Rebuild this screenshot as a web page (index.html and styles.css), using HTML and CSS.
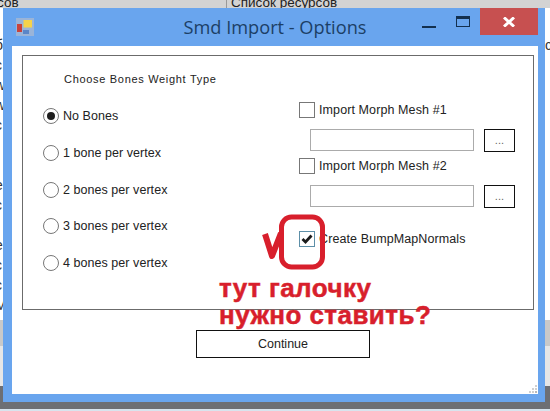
FILE: index.html
```html
<!DOCTYPE html>
<html lang="en">
<head>
    <meta charset="UTF-8">
    <meta name="viewport" content="width=device-width, initial-scale=1.0">
    <title>Smd Import - Options</title>
    <link rel="stylesheet" href="styles.css">
</head>
<body>
    <div class="desktop">
        <div class="app-head">
            <span class="app-head-left"><span class="app-head-cut">сов</span></span>
            <span class="app-head-right">Список ресурсов</span>
        </div>
        <div class="app-list">
            <div class="app-list-left">
                <div>б</div><div>с</div><div>w</div><div>w</div><div>c</div><div>r</div><div>r</div><div>e</div>
                <div>c</div><div>r</div><div>e</div><div>c</div><div>c</div><div>M</div>
            </div>
            <div class="app-list-right">с</div>
        </div>
        <div class="app-band"></div>
        <div class="app-foot"></div>

        <div class="window">
            <div class="titlebar">
                <svg class="app-icon" width="18" height="18" viewBox="0 0 18 18">
                    <rect x="0" y="0" width="18" height="18" fill="#9ab4d8"/>
                    <rect x="7.5" y="2" width="8.5" height="7.5" fill="#f5d34a"/>
                    <rect x="1" y="6" width="5" height="8" fill="#c8423c"/>
                    <rect x="7" y="12" width="6" height="4" fill="#5a86c8"/>
                </svg>
                <div class="title">Smd Import - Options</div>
                <div class="caption-min"></div>
                <div class="caption-max"></div>
                <div class="caption-close">
                    <svg width="12" height="10" viewBox="0 0 12 10">
                        <path d="M1 0.5 L11 9.5 M11 0.5 L1 9.5" stroke="#fff" stroke-width="3" fill="none"/>
                    </svg>
                </div>
            </div>
            <div class="client">
                <div class="group">
                    <div class="col-left">
                        <div class="group-title">Choose Bones Weight Type</div>
                        <div class="radio-list">
                            <div class="radio-row"><span class="radio checked"></span>No Bones</div>
                            <div class="radio-row"><span class="radio"></span>1 bone per vertex</div>
                            <div class="radio-row"><span class="radio"></span>2 bones per vertex</div>
                            <div class="radio-row"><span class="radio"></span>3 bones per vertex</div>
                            <div class="radio-row"><span class="radio"></span>4 bones per vertex</div>
                        </div>
                    </div>
                    <div class="col-right">
                        <div class="check-row"><span class="check"></span>Import Morph Mesh #1</div>
                        <div class="file-row">
                            <div class="file-box"></div>
                            <div class="file-btn">...</div>
                        </div>
                        <div class="check-row second"><span class="check"></span>Import Morph Mesh #2</div>
                        <div class="file-row">
                            <div class="file-box"></div>
                            <div class="file-btn">...</div>
                        </div>
                        <div class="check-row third">
                            <span class="check on">
                                <svg width="14" height="14" viewBox="0 0 14 14">
                                    <path d="M2.5 7 L5.5 10 L11.5 3.5" stroke="#1b1b1b" stroke-width="2.8" fill="none"/>
                                </svg>
                            </span>Create BumpMapNormals
                        </div>
                    </div>
                </div>
                <div class="actions">
                    <div class="continue">Continue</div>
                </div>
                <svg class="grip" width="9" height="9" viewBox="0 0 9 9">
                    <rect x="6" y="0" width="2" height="2" fill="#d0d0d0"/>
                    <rect x="3" y="3" width="2" height="2" fill="#d0d0d0"/>
                    <rect x="6" y="3" width="2" height="2" fill="#d0d0d0"/>
                    <rect x="0" y="6" width="2" height="2" fill="#d0d0d0"/>
                    <rect x="3" y="6" width="2" height="2" fill="#d0d0d0"/>
                    <rect x="6" y="6" width="2" height="2" fill="#b8b8b8"/>
                </svg>
            </div>
        </div>

        <svg class="marker" width="80" height="60" viewBox="0 0 80 60">
            <rect x="20.5" y="3" width="41" height="50" rx="10" fill="none" stroke="#d81f2c" stroke-width="5"/>
            <path d="M4 20 L11 42 L20 19" fill="none" stroke="#d81f2c" stroke-width="6" stroke-linejoin="round"/>
        </svg>
        <div class="note">тут галочку<br>нужно ставить?</div>
    </div>
</body>
</html>
```

FILE: styles.css
```css
html, body {
    margin: 0;
    padding: 0;
}
body {
    width: 550px;
    height: 411px;
    overflow: hidden;
    font-family: "Liberation Sans", Arial, sans-serif;
    color: #222;
    background: #fff;
}
.desktop {
    position: relative;
    width: 550px;
    height: 411px;
    overflow: hidden;
}
.app-head {
    height: 8px;
    background: #d3d3d3;
    overflow: hidden;
    font-size: 13.5px;
    line-height: 6px;
    display: flex;
}
.app-head-left {
    width: 226px;
    border-right: 1px solid #999;
    height: 8px;
}
.app-head-cut {
    margin-left: -3px;
}
.app-head-right {
    padding-left: 4px;
    height: 8px;
}
.app-list {
    height: 312px;
    padding-top: 27px;
    box-sizing: border-box;
    font-size: 14px;
    line-height: 20px;
    color: #333;
    display: flex;
    justify-content: space-between;
    overflow: hidden;
}
.app-list-left {
    margin-left: -5px;
}
.app-list-right {
    width: 5px;
}
.app-band {
    height: 26px;
    background: #c9c9c9;
}
.app-foot {
    height: 65px;
    background: linear-gradient(#e6e6e6 0, #e6e6e6 40px, #6d6f74 40px, #6d6f74 63px, #d8e4ee 63px);
}
.window {
    position: absolute;
    left: 3px;
    top: 8px;
    width: 542px;
    height: 394px;
    background: #69a5ee;
    display: flex;
    flex-direction: column;
}
.titlebar {
    height: 38px;
    flex: none;
    display: flex;
    position: relative;
}
.app-icon {
    margin: 10px 0 0 13px;
}
.title {
    position: absolute;
    left: 0;
    top: 7px;
    width: 544px;
    text-align: center;
    font-family: "Open Sans", sans-serif;
    font-size: 18.2px;
    line-height: 24px;
    color: #1c3f66;
}
.caption-min {
    position: absolute;
    left: 419px;
    top: 18px;
    width: 14px;
    height: 2px;
    background: #13304f;
}
.caption-max {
    position: absolute;
    left: 453px;
    top: 8px;
    width: 12px;
    height: 7px;
    border: 1px solid #13304f;
    border-top-width: 3px;
}
.caption-close {
    position: absolute;
    left: 477px;
    top: 0;
    width: 58px;
    height: 27px;
    background: #c75050;
    display: flex;
    align-items: center;
    justify-content: center;
}
.client {
    flex: 1;
    margin: 0 7px 8px 9px;
    background: #fff;
    padding: 9px 4px 0 10px;
    position: relative;
}
.group {
    height: 255px;
    border: 1px solid #6b6b6b;
    display: flex;
    box-sizing: border-box;
    font-size: 12px;
    letter-spacing: 0.05px;
}
.col-left {
    width: 276px;
    flex: none;
    padding: 17px 0 0 20px;
    box-sizing: border-box;
}
.group-title {
    margin-left: 21px;
    font-size: 11px;
    line-height: 13px;
    letter-spacing: 0.69px;
}
.radio-list {
    margin-top: 22px;
    display: flex;
    flex-direction: column;
    gap: 20.75px;
}
.radio-row {
    display: flex;
    align-items: center;
    height: 16px;
    font-size: 12.5px;
}
.radio {
    width: 14px;
    height: 14px;
    border: 1px solid #777;
    border-radius: 50%;
    margin-right: 4px;
    background: #fff;
    position: relative;
}
.radio.checked::after {
    content: "";
    position: absolute;
    left: 3px;
    top: 3px;
    width: 8px;
    height: 8px;
    border-radius: 50%;
    background: #1e1e1e;
}
.col-right {
    flex: 1;
    padding-top: 46px;
}
.check-row {
    display: flex;
    align-items: center;
    height: 16px;
    font-size: 12.5px;
    letter-spacing: 0.1px;
}
.check-row.second {
    margin-top: 6px;
}
.check-row.third {
    margin-top: 23px;
}
.check {
    width: 14px;
    height: 14px;
    border: 1px solid #777;
    margin-right: 4px;
    background: #fff;
    flex: none;
    display: flex;
}
.check.on {
    border-color: #5d8fa8;
}
.file-row {
    display: flex;
    margin: 11px 0 0 11px;
    height: 23px;
}
.file-box {
    width: 162px;
    height: 20px;
    border: 1px solid #ababab;
}
.file-btn {
    width: 29px;
    height: 21px;
    margin-left: 10px;
    border: 1px solid #111;
    text-align: center;
    font-size: 11px;
    line-height: 21px;
    color: #666;
}
.actions {
    display: flex;
    margin-top: 20px;
    padding-left: 174px;
}
.continue {
    width: 172px;
    height: 26px;
    border: 1px solid #111;
    text-align: center;
    font-size: 12.5px;
    line-height: 26px;
}
.grip {
    position: absolute;
    right: 0;
    bottom: 0;
}
.marker {
    position: absolute;
    left: 261px;
    top: 214px;
}
.note {
    position: absolute;
    left: 219px;
    top: 275px;
    font-weight: bold;
    font-size: 26px;
    line-height: 27px;
    letter-spacing: 0.45px;
    color: #d81f2c;
    -webkit-text-stroke: 0.5px #d81f2c;
}
```
